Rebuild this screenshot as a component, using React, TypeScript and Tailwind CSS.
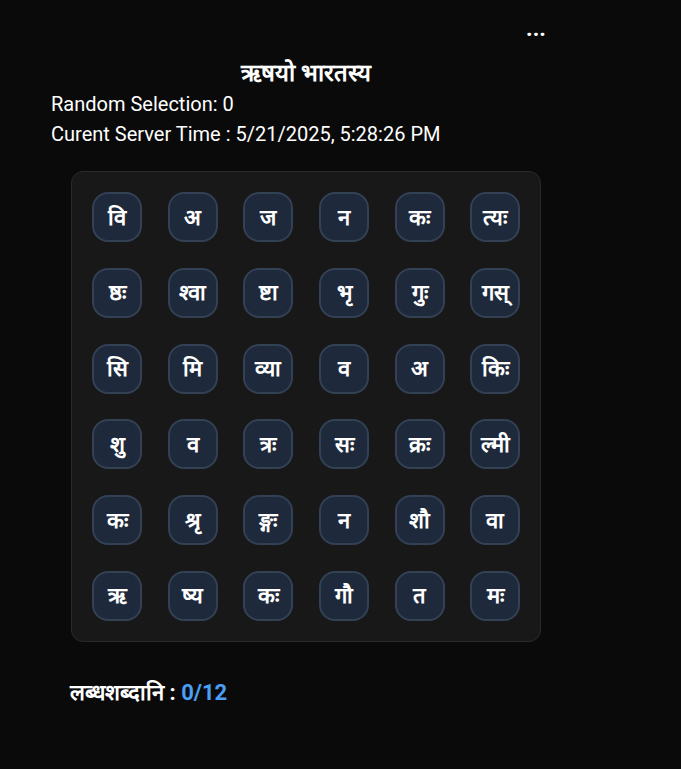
const letters = [
  'वि', 'अ', 'ज', 'न', 'कः', 'त्यः',
  'ष्ठः', 'श्वा', 'ष्टा', 'भृ', 'गुः', 'गस्',
  'सि', 'मि', 'व्या', 'व', 'अ', 'किः',
  'शु', 'व', 'त्रः', 'सः', 'क्रः', 'ल्मी',
  'कः', 'श्रृ', 'ङ्गः', 'न', 'शौ', 'वा',
  'ऋ', 'ष्य', 'कः', 'गौ', 'त', 'मः',
];

export default function App() {
  return (
    <div className="min-h-screen bg-[#0a0a0a] text-white font-['Roboto',sans-serif]">
      <div className="w-[612px] pt-[18px]">
        <div className="flex justify-end pr-[66px]">
          <button className="text-[20px] leading-[22px] font-black tracking-[0.5px]">...</button>
        </div>
        <h1 className="mt-[18px] text-center text-[24px] leading-[30px] font-bold">ऋषयो भारतस्य</h1>
        <div className="mt-[1px] pl-[51px] text-[20px] leading-[30px]">
          <p>Random Selection: 0</p>
          <p>Curent Server Time : 5/21/2025, 5:28:26 PM</p>
        </div>
        <div className="mx-auto mt-[22px] w-[470px] rounded-xl border border-[#2a2a2a] bg-[#181818] p-5">
          <div className="grid grid-cols-6 gap-x-[26px] gap-y-[25.8px]">
            {letters.map((l, i) => (
              <button
                key={i}
                className="flex h-[50px] w-[50px] items-center justify-center rounded-2xl border-2 border-[#334155] bg-[#1e293b] text-[22px] font-bold"
              >
                {l}
              </button>
            ))}
          </div>
        </div>
        <p className="mt-[34px] pl-[70px] text-[22px] font-bold">
          लब्धशब्दानि : <span className="text-[#4a9ff5]">0/12</span>
        </p>
      </div>
    </div>
  );
}
